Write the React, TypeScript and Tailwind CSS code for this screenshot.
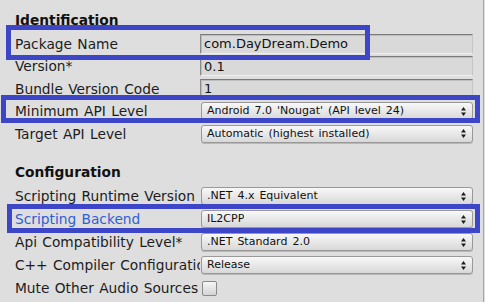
import React from "react";

type Row =
  | { kind: "text"; label: string; value: string; labelClass?: string }
  | { kind: "select"; label: string; value: string; labelClass?: string }
  | { kind: "check"; label: string; labelClass?: string };

const identification: Row[] = [
  { kind: "text", label: "Package Name", value: "com.DayDream.Demo" },
  { kind: "text", label: "Version*", value: "0.1" },
  { kind: "text", label: "Bundle Version Code", value: "1" },
  { kind: "select", label: "Minimum API Level", value: "Android 7.0 'Nougat' (API level 24)" },
  { kind: "select", label: "Target API Level", value: "Automatic (highest installed)" },
];

const configuration: Row[] = [
  { kind: "select", label: "Scripting Runtime Version", value: ".NET 4.x Equivalent" },
  { kind: "select", label: "Scripting Backend", value: "IL2CPP", labelClass: "text-[#2d5fd6]" },
  { kind: "select", label: "Api Compatibility Level*", value: ".NET Standard 2.0" },
  { kind: "select", label: "C++ Compiler Configuration", value: "Release" },
  { kind: "check", label: "Mute Other Audio Sources" },
];

// little up/down arrows on the popup buttons
function Arrows() {
  return (
    <svg width="5" height="9" viewBox="0 0 5 9" className="shrink-0">
      <path d="M2.5 0 L5 3.5 L0 3.5 Z" fill="#1e1e1e" />
      <path d="M2.5 9 L5 5.5 L0 5.5 Z" fill="#1e1e1e" />
    </svg>
  );
}

function Field({ row }: { row: Row }) {
  if (row.kind === "text") {
    return (
      <div className="h-[20px] w-[273px] flex items-center pl-[3px] bg-[#d9d9d9] border border-t-[#7a7a7a] border-l-[#8a8a8a] border-r-[#c6c6c6] border-b-[#efefef] shadow-[inset_1px_1px_0_#bdbdbd] text-[13px] text-[#111]">
        {row.value}
      </div>
    );
  }
  if (row.kind === "select") {
    return (
      <div className="h-[18px] w-[272px] ml-[1px] flex items-center justify-between pl-[5px] pr-[6px] rounded-[3px] border border-[#999] bg-gradient-to-b from-[#f8f8f8] to-[#d8d8d8] shadow-[0_1px_0_#b8b8b8] text-[11px] leading-[14px] [word-spacing:1.5px] text-[#111]">
        <span className="truncate">{row.value}</span>
        <Arrows />
      </div>
    );
  }
  return <div className="w-[15px] h-[15px] ml-[2px] rounded-[2px] border border-[#8a8a8a] bg-gradient-to-b from-[#f6f6f6] to-[#d4d4d4]" />;
}

function FieldRow({ row, tall }: { row: Row; tall?: boolean }) {
  return (
    <div className={`${tall ? "h-[23px]" : "h-[22.5px]"} flex items-center`}>
      <div className={`w-[200px] shrink-0 pl-[15px] overflow-hidden whitespace-nowrap leading-[16px] [word-spacing:1px] ${row.labelClass ?? "text-[#1c1c1c]"}`}>
        {row.label}
      </div>
      <Field row={row} />
    </div>
  );
}

function Section({ title, rows, tall, className }: { title: string; rows: Row[]; tall?: boolean; className?: string }) {
  return (
    <div className={className}>
      <div className="h-[19px] pl-[15px] font-bold text-[#111]">{title}</div>
      {rows.map((r) => (
        <FieldRow key={r.label} row={r} tall={tall} />
      ))}
    </div>
  );
}

export default function App() {
  return (
    <div
      className="relative w-[485px] h-[302px] overflow-hidden bg-[#dedede] text-[13.75px] leading-none"
      style={{ fontFamily: '"DejaVu Sans", Verdana, sans-serif' }}
    >
      <div className="w-[484px] h-full border-r border-[#a6a6a6] pt-[13.5px] flex flex-col">
        <Section title="Identification" rows={identification} />
        <Section title="Configuration" rows={configuration} tall className="mt-[20.5px]" />
      </div>

      {/* annotation boxes drawn over the inspector */}
      <div className="absolute left-[6px] top-[25px] w-[364px] h-[35px] border-[5px] border-[#3c46c6]" />
      <div className="absolute left-[1px] top-[95px] w-[479px] h-[28px] border-[5px] border-[#3c46c6]" />
      <div className="absolute left-[7px] top-[204px] w-[473px] h-[29px] border-[5px] border-[#3c46c6]" />
    </div>
  );
}
